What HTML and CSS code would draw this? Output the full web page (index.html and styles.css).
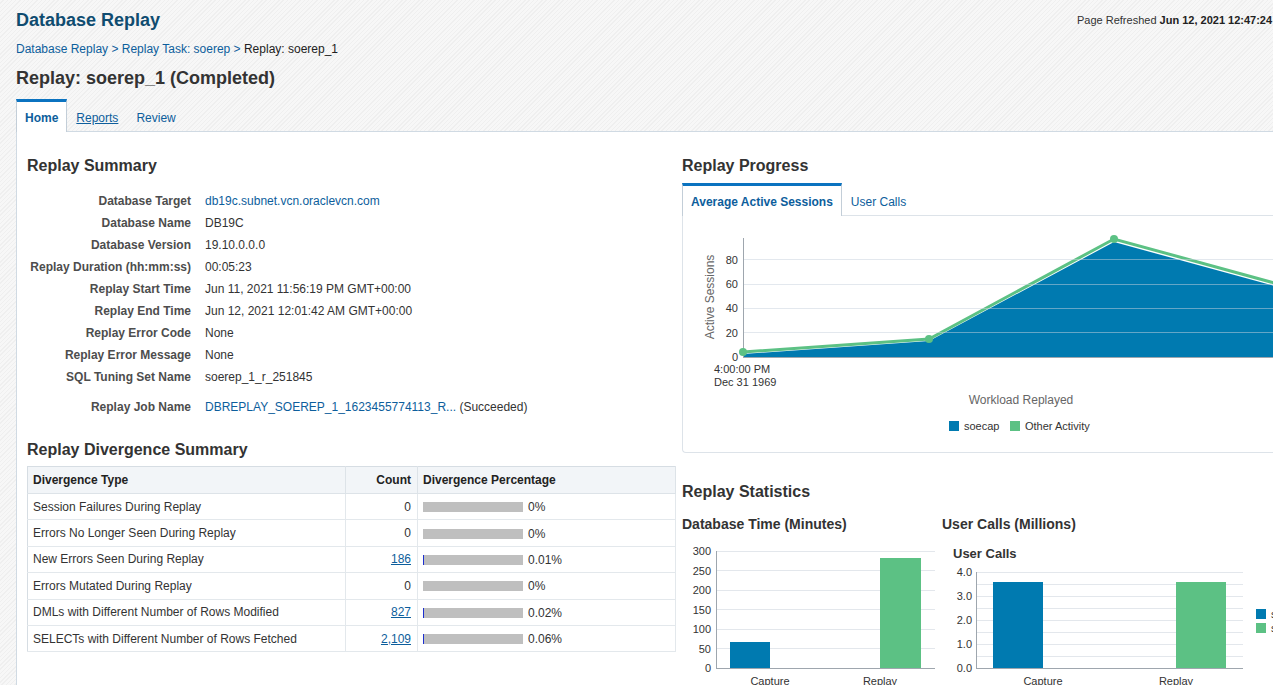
FILE: index.html
```html
<!DOCTYPE html>
<html lang="en">
<head>
<meta charset="utf-8">
<title>Database Replay</title>
<link rel="stylesheet" href="styles.css">
</head>
<body>
<div class="page">
  <header class="top">
    <h1 class="app-title">Database Replay</h1>
    <div class="refreshed">Page Refreshed <b>Jun 12, 2021 12:47:24 AM GMT+00:00</b></div>
  </header>
  <nav class="crumbs"><a href="#">Database Replay</a><span class="sep"> &gt; </span><a href="#">Replay Task: soerep</a><span class="sep"> &gt; </span><span>Replay: soerep_1</span></nav>
  <h2 class="page-title">Replay: soerep_1 (Completed)</h2>
  <div class="tabs">
    <div class="tab active">Home</div>
    <a class="tab underline" href="#">Reports</a>
    <a class="tab" href="#">Review</a>
  </div>
  <main class="panel">
    <section class="col-left">
      <h3 class="section-title">Replay Summary</h3>
      <dl class="summary">
        <dt>Database Target</dt><dd><a href="#">db19c.subnet.vcn.oraclevcn.com</a></dd>
        <dt>Database Name</dt><dd>DB19C</dd>
        <dt>Database Version</dt><dd>19.10.0.0.0</dd>
        <dt>Replay Duration (hh:mm:ss)</dt><dd>00:05:23</dd>
        <dt>Replay Start Time</dt><dd>Jun 11, 2021 11:56:19 PM GMT+00:00</dd>
        <dt>Replay End Time</dt><dd>Jun 12, 2021 12:01:42 AM GMT+00:00</dd>
        <dt>Replay Error Code</dt><dd>None</dd>
        <dt>Replay Error Message</dt><dd>None</dd>
        <dt>SQL Tuning Set Name</dt><dd>soerep_1_r_251845</dd>
        <dt class="gap">Replay Job Name</dt><dd class="gap"><a href="#">DBREPLAY_SOEREP_1_1623455774113_R...</a> (Succeeded)</dd>
      </dl>

      <h3 class="section-title div-title">Replay Divergence Summary</h3>
      <table class="div-table">
        <colgroup><col class="c1"><col class="c2"><col class="c3"></colgroup>
        <thead>
          <tr><th>Divergence Type</th><th class="num">Count</th><th>Divergence Percentage</th></tr>
        </thead>
        <tbody>
          <tr><td>Session Failures During Replay</td><td class="num">0</td><td><span class="bar"></span><span class="pct">0%</span></td></tr>
          <tr><td>Errors No Longer Seen During Replay</td><td class="num">0</td><td><span class="bar"></span><span class="pct">0%</span></td></tr>
          <tr><td>New Errors Seen During Replay</td><td class="num"><a href="#">186</a></td><td><span class="bar"><span class="fill" style="width:1%"></span></span><span class="pct">0.01%</span></td></tr>
          <tr><td>Errors Mutated During Replay</td><td class="num">0</td><td><span class="bar"></span><span class="pct">0%</span></td></tr>
          <tr><td>DMLs with Different Number of Rows Modified</td><td class="num"><a href="#">827</a></td><td><span class="bar"><span class="fill" style="width:1%"></span></span><span class="pct">0.02%</span></td></tr>
          <tr><td>SELECTs with Different Number of Rows Fetched</td><td class="num"><a href="#">2,109</a></td><td><span class="bar"><span class="fill" style="width:1%"></span></span><span class="pct">0.06%</span></td></tr>
        </tbody>
      </table>
    </section>

    <section class="col-right">
      <h3 class="section-title">Replay Progress</h3>
      <div class="tabs sub-tabs">
        <div class="tab active">Average Active Sessions</div>
        <a class="tab" href="#">User Calls</a>
      </div>
      <div class="chart-box">
        <svg class="chart" width="640" height="236" viewBox="0 0 640 236">
          <polygon fill="#007ab0" points="60,141 60,138 246,125 431,26 617,77 640,83 640,141"/>
          <polyline fill="none" stroke="#5cc184" stroke-width="3" points="60,136 246,123 431,23 617,74 640,80"/>
          <g stroke="rgba(200,210,222,0.5)" stroke-width="1">
            <line x1="61" y1="43.5" x2="640" y2="43.5"/>
            <line x1="61" y1="68.5" x2="640" y2="68.5"/>
            <line x1="61" y1="92.5" x2="640" y2="92.5"/>
            <line x1="61" y1="116.5" x2="640" y2="116.5"/>
          </g>
          <line x1="60.5" y1="22" x2="60.5" y2="141" stroke="#9ea6ae"/>
          <line x1="60" y1="141.5" x2="640" y2="141.5" stroke="#9ea6ae"/>
          <circle cx="60" cy="136" r="4" fill="#5cc184"/>
          <circle cx="246" cy="123" r="4" fill="#5cc184"/>
          <circle cx="431" cy="23" r="4" fill="#5cc184"/>
          <g class="tick" text-anchor="end">
            <text x="55" y="48">80</text>
            <text x="55" y="72">60</text>
            <text x="55" y="96">40</text>
            <text x="55" y="121">20</text>
            <text x="55" y="145">0</text>
          </g>
          <text class="axis-title" transform="translate(31,81) rotate(-90)" text-anchor="middle">Active Sessions</text>
          <text class="tick" x="31" y="157">4:00:00 PM</text>
          <text class="tick" x="31" y="170">Dec 31 1969</text>
          <text class="axis-title" x="338" y="188" text-anchor="middle">Workload Replayed</text>
          <rect x="266" y="205" width="10" height="10" fill="#007ab0"/>
          <text class="tick" x="281" y="214">soecap</text>
          <rect x="327" y="205" width="10" height="10" fill="#5cc184"/>
          <text class="tick" x="342" y="214">Other Activity</text>
        </svg>
      </div>

      <h3 class="section-title stats-title">Replay Statistics</h3>
      <div class="stats">
        <div class="stat stat-time">
          <h4 class="stat-title">Database Time (Minutes)</h4>
          <svg class="chart" width="260" height="160" viewBox="0 0 260 160">
            <g stroke="#e3e7ec">
              <line x1="35" y1="18.5" x2="253" y2="18.5"/>
              <line x1="35" y1="37.5" x2="253" y2="37.5"/>
              <line x1="35" y1="57.5" x2="253" y2="57.5"/>
              <line x1="35" y1="76.5" x2="253" y2="76.5"/>
              <line x1="35" y1="96.5" x2="253" y2="96.5"/>
              <line x1="35" y1="115.5" x2="253" y2="115.5"/>
            </g>
            <rect x="48" y="109" width="40" height="26" fill="#007ab0"/>
            <rect x="198" y="25" width="41" height="110" fill="#5cc184"/>
            <line x1="34.5" y1="18" x2="34.5" y2="135" stroke="#9ea6ae"/>
            <line x1="34" y1="135.5" x2="253" y2="135.5" stroke="#9ea6ae"/>
            <g class="tick" text-anchor="end">
              <text x="29" y="22">300</text>
              <text x="29" y="42">250</text>
              <text x="29" y="61">200</text>
              <text x="29" y="81">150</text>
              <text x="29" y="100">100</text>
              <text x="29" y="120">50</text>
              <text x="29" y="139">0</text>
            </g>
            <g class="tick" text-anchor="middle">
              <text x="88" y="152">Capture</text>
              <text x="198" y="152">Replay</text>
            </g>
          </svg>
        </div>
        <div class="stat stat-calls">
          <h4 class="stat-title">User Calls (Millions)</h4>
          <svg class="chart" width="340" height="160" viewBox="0 0 340 160">
            <text class="chart-title" x="11" y="25">User Calls</text>
            <g stroke="#e3e7ec">
              <line x1="35" y1="39.5" x2="301" y2="39.5"/>
              <line x1="35" y1="51.5" x2="301" y2="51.5"/>
              <line x1="35" y1="63.5" x2="301" y2="63.5"/>
              <line x1="35" y1="75.5" x2="301" y2="75.5"/>
              <line x1="35" y1="87.5" x2="301" y2="87.5"/>
              <line x1="35" y1="99.5" x2="301" y2="99.5"/>
              <line x1="35" y1="111.5" x2="301" y2="111.5"/>
              <line x1="35" y1="123.5" x2="301" y2="123.5"/>
            </g>
            <rect x="51" y="49" width="50" height="86" fill="#007ab0"/>
            <rect x="234" y="49" width="50" height="86" fill="#5cc184"/>
            <line x1="34.5" y1="39" x2="34.5" y2="135" stroke="#9ea6ae"/>
            <line x1="34" y1="135.5" x2="301" y2="135.5" stroke="#9ea6ae"/>
            <g class="tick" text-anchor="end">
              <text x="30" y="43">4.0</text>
              <text x="30" y="67">3.0</text>
              <text x="30" y="91">2.0</text>
              <text x="30" y="115">1.0</text>
              <text x="30" y="139">0.0</text>
            </g>
            <g class="tick" text-anchor="middle">
              <text x="101" y="152">Capture</text>
              <text x="234" y="152">Replay</text>
            </g>
            <rect x="314" y="76" width="10" height="10" fill="#007ab0"/>
            <text class="tick" x="329" y="85">soecap</text>
            <rect x="314" y="90" width="10" height="10" fill="#5cc184"/>
            <text class="tick" x="329" y="99">soerep_1</text>
          </svg>
        </div>
      </div>
    </section>
  </main>
</div>
</body>
</html>
```

FILE: styles.css
```css
* { box-sizing: border-box; }

html, body {
  margin: 0;
  height: 100%;
  overflow: hidden;
}

body {
  font-family: "Liberation Sans", Arial, Helvetica, sans-serif;
  font-size: 12px;
  color: #333;
  background-color: #f4f4f4;
  background-image: repeating-linear-gradient(135deg, #f7f7f7 0, #f7f7f7 2px, #efefef 2px, #efefef 3px);
}

.page {
  width: 1420px;
  padding-top: 9px;
}

a { color: #0d5e9c; text-decoration: none; }

.top {
  display: grid;
  grid-template-columns: 1061px max-content;
  align-items: center;
  padding-left: 16px;
}

.app-title {
  margin: 0;
  font-size: 18px;
  line-height: 22px;
  font-weight: bold;
  color: #0f4c70;
}

.refreshed {
  font-size: 11px;
  color: #333;
  white-space: nowrap;
}
.refreshed b { color: #222; }

.crumbs {
  margin: 10px 0 0 16px;
  line-height: 16px;
  font-size: 12px;
  color: #222;
}
.crumbs .sep { color: #0d5e9c; }

.page-title {
  margin: 10px 0 0 16px;
  font-size: 18px;
  line-height: 22px;
  font-weight: bold;
  color: #333;
}

.tabs {
  display: flex;
  height: 32px;
  margin: 10px 0 0 16px;
  position: relative;
  z-index: 1;
}

.tab {
  height: 33px;
  margin-bottom: -1px;
  padding: 0 8px;
  border: 1px solid transparent;
  border-top: 3px solid transparent;
  border-bottom: none;
  display: flex;
  align-items: center;
  padding-top: 1px;
  font-size: 12px;
  color: #0d5e9c;
  white-space: nowrap;
}
.tab.underline { text-decoration: underline; }
.tab.active {
  background: #fff;
  border-color: #c3ced8;
  border-top-color: #0b73c0;
  font-weight: bold;
}

.panel {
  display: flex;
  align-items: flex-start;
  margin-left: 16px;
  min-height: 620px;
  padding: 24px 0 0 10px;
  background: #fff;
  border-left: 1px solid #d0dae3;
  border-top: 1px solid #d0dae3;
}

.col-left { flex: none; width: 648px; }
.col-right { flex: none; width: 640px; margin-left: 7px; }

.section-title {
  margin: 0;
  font-size: 16px;
  line-height: 19px;
  font-weight: bold;
  color: #333;
}

.summary {
  display: grid;
  grid-template-columns: 164px 1fr;
  column-gap: 14px;
  margin: 15px 0 0;
}
.summary dt {
  text-align: right;
  font-weight: bold;
  color: #4d4d4d;
  line-height: 22px;
  white-space: nowrap;
}
.summary dd {
  margin: 0;
  line-height: 22px;
  color: #333;
  white-space: nowrap;
}
.summary .gap { margin-top: 8px; }

.div-title { margin-top: 22px; }

.div-table {
  margin-top: 7px;
  width: 648px;
  border-collapse: collapse;
  border: 1px solid #d6dde3;
  table-layout: fixed;
}
.div-table .c1 { width: 318px; }
.div-table .c2 { width: 72px; }
.div-table .c3 { width: 258px; }
.div-table th {
  height: 27px;
  padding: 0 6px 0 5px;
  background: #f2f5f8;
  text-align: left;
  font-weight: bold;
  color: #222;
  border-right: 1px solid #dde3e8;
  border-bottom: 1px solid #dde3e8;
}
.div-table td {
  height: 26.4px;
  padding: 0 6px 0 5px;
  color: #333;
  white-space: nowrap;
  border-right: 1px solid #e3e8ec;
  border-bottom: 1px solid #e3e8ec;
}
.div-table .num { text-align: right; }
.div-table .num a { text-decoration: underline; }

.bar {
  display: inline-block;
  vertical-align: middle;
  width: 100px;
  height: 10px;
  background: #bfbfbf;
}
.bar .fill {
  display: block;
  height: 100%;
  min-width: 1px;
  background: #1c2fd0;
}
.pct { margin-left: 5px; vertical-align: middle; }

.sub-tabs { margin: 8px 0 0 0; }

.chart-box {
  height: 238px;
  border: 1px solid #dde3e9;
  border-right: none;
  border-radius: 0 0 0 4px;
  background: #fff;
}
.chart { display: block; }
.chart text { font-family: "Liberation Sans", Arial, Helvetica, sans-serif; }
.chart .tick { font-size: 11px; fill: #333; }
.chart .axis-title { font-size: 12px; fill: #666; }
.chart .chart-title { font-size: 13px; font-weight: bold; fill: #333; }

.stats-title { margin-top: 29px; }

.stats { display: flex; margin-top: 15px; }
.stat { flex: none; }
.stat-time { width: 260px; }
.stat-calls { width: 340px; }
.stat-title {
  margin: 0;
  font-size: 14px;
  line-height: 17px;
  font-weight: bold;
  color: #333;
  white-space: nowrap;
}
```
